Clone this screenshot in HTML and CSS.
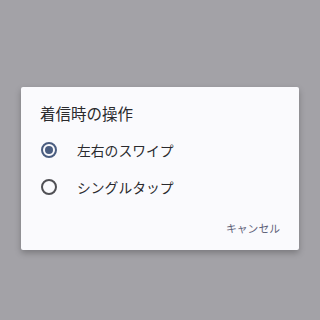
FILE: index.html
```html
<!DOCTYPE html>
<html lang="ja">
<head>
<meta charset="utf-8">
<link rel="stylesheet" href="styles.css">
</head>
<body>
<div class="dialog">
  <div class="title">着信時の操作</div>
  <div class="options">
    <div class="row"><span class="radio checked"></span><span class="label">左右のスワイプ</span></div>
    <div class="row"><span class="radio"></span><span class="label">シングルタップ</span></div>
  </div>
  <div class="actions"><span class="btn">キャンセル</span></div>
</div>
</body>
</html>
```
FILE: styles.css
```css
html, body {
  margin: 0;
  padding: 0;
  width: 320px;
  height: 320px;
  background: #a3a2a7;
  font-family: "Noto Sans CJK JP", "Noto Sans", sans-serif;
}
.dialog {
  box-sizing: border-box;
  margin: 87px 0 0 21px;
  width: 278px;
  height: 163px;
  background: #fafafd;
  border-radius: 2px;
  box-shadow: 0 3px 6px rgba(0,0,0,0.25);
  padding: 14px 19px 12px 19px;
  display: flex;
  flex-direction: column;
}
.title {
  font-size: 15.5px;
  line-height: 24px;
  color: #2a2a2e;
}
.options {
  margin-top: 6px;
  display: flex;
  flex-direction: column;
}
.row {
  height: 37px;
  display: flex;
  align-items: center;
  padding-left: 1px;
}
.radio {
  box-sizing: border-box;
  width: 16px;
  height: 16px;
  border: 2px solid #505055;
  border-radius: 50%;
  flex: none;
  position: relative;
}
.radio.checked {
  border-color: #4a5d80;
}
.radio.checked::after {
  content: "";
  position: absolute;
  left: 2px;
  top: 2px;
  width: 8px;
  height: 8px;
  border-radius: 50%;
  background: #4a5d80;
}
.label {
  margin-left: 20px;
  font-size: 13.8px;
  color: #2a2a2e;
}
.actions {
  margin-top: auto;
  display: flex;
  justify-content: flex-end;
}
.btn {
  font-size: 10.8px;
  line-height: 20px;
  color: #5e6178;
}
```
